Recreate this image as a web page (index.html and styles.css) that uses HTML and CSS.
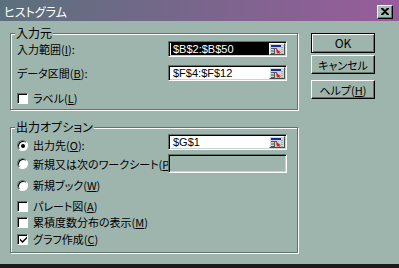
FILE: index.html
```html
<!DOCTYPE html>
<html lang="ja">
<head>
  <meta charset="UTF-8" />
  <meta name="viewport" content="width=device-width, initial-scale=1.0"/>
  <title>ヒストグラム</title>
  <link rel="stylesheet" href="styles.css">
</head>
<body>
  <div class="window">
    <div class="titlebar">
      <span class="title">ヒストグラム</span>
      <button class="close-btn">
        <svg width="8" height="7" viewBox="0 0 8 7"><path d="M0 0h2l2 2 2-2h2v1L5 3.5 8 6v1H6L4 5 2 7H0V6l3-2.5L0 1z" fill="#000"/></svg>
      </button>
    </div>

    <div class="dialog">
      <div class="groups">
        <div class="group group-input">
          <span class="legend">入力元</span>
          <div class="row">
            <span class="field-label">入力範囲(<u>I</u>):</span>
            <div class="refedit selected">
              <span class="value">$B$2:$B$50</span>
              <span class="pick"><svg width="12" height="9" viewBox="0 0 12 9"><rect x="0" y="0" width="10" height="2" fill="#1a2a9a"/><path d="M0 3.5h6M0 6h4M0 8.5h4M3.5 3v6" stroke="#4a5a60" stroke-width="1"/><path d="M5 3.5l5 4-2 .2 1.2 1.3h-1L7 7.8 6 9z" fill="#e01818"/><path d="M11 2v7" stroke="#7a8a90" stroke-dasharray="1 1"/></svg></span>
            </div>
          </div>
          <div class="row row-second">
            <span class="field-label">データ区間(<u>B</u>):</span>
            <div class="refedit">
              <span class="value">$F$4:$F$12</span>
              <span class="pick"><svg width="12" height="9" viewBox="0 0 12 9"><rect x="0" y="0" width="10" height="2" fill="#1a2a9a"/><path d="M0 3.5h6M0 6h4M0 8.5h4M3.5 3v6" stroke="#4a5a60" stroke-width="1"/><path d="M5 3.5l5 4-2 .2 1.2 1.3h-1L7 7.8 6 9z" fill="#e01818"/><path d="M11 2v7" stroke="#7a8a90" stroke-dasharray="1 1"/></svg></span>
            </div>
          </div>
          <div class="row row-label">
            <span class="choice"><span class="checkbox"></span><span class="choice-text">ラベル(<u>L</u>)</span></span>
          </div>
        </div>

        <div class="group group-output">
          <span class="legend">出力オプション</span>
          <div class="row row-dest">
            <span class="choice"><span class="radio on"></span><span class="choice-text">出力先(<u>O</u>):</span></span>
            <div class="refedit">
              <span class="value">$G$1</span>
              <span class="pick"><svg width="12" height="9" viewBox="0 0 12 9"><rect x="0" y="0" width="10" height="2" fill="#1a2a9a"/><path d="M0 3.5h6M0 6h4M0 8.5h4M3.5 3v6" stroke="#4a5a60" stroke-width="1"/><path d="M5 3.5l5 4-2 .2 1.2 1.3h-1L7 7.8 6 9z" fill="#e01818"/><path d="M11 2v7" stroke="#7a8a90" stroke-dasharray="1 1"/></svg></span>
            </div>
          </div>
          <div class="row row-sheet">
            <span class="choice"><span class="radio"></span><span class="choice-text">新規又は次のワークシート(<u>P</u>):</span></span>
            <div class="textbox disabled"></div>
          </div>
          <div class="row row-book">
            <span class="choice"><span class="radio"></span><span class="choice-text">新規ブック(<u>W</u>)</span></span>
          </div>
          <div class="row row-check row-pareto">
            <span class="choice"><span class="checkbox"></span><span class="choice-text">パレート図(<u>A</u>)</span></span>
          </div>
          <div class="row row-check">
            <span class="choice"><span class="checkbox"></span><span class="choice-text">累積度数分布の表示(<u>M</u>)</span></span>
          </div>
          <div class="row row-check row-chart">
            <span class="choice"><span class="checkbox checked"><svg width="7" height="7" viewBox="0 0 7 7"><path d="M0 2.5l2.5 2.5L7 0.5v2L2.5 7 0 4.5z" fill="#000"/></svg></span><span class="choice-text">グラフ作成(<u>C</u>)</span></span>
          </div>
        </div>
      </div>

      <div class="buttons">
        <button class="btn btn-default">OK</button>
        <button class="btn btn-cancel">キャンセル</button>
        <button class="btn btn-help">ヘルプ(<u>H</u>)</button>
      </div>
    </div>
  </div>
</body>
</html>
```

FILE: styles.css
```css
* {
  box-sizing: border-box;
}
body {
  margin: 0;
  background: #1c1c1c;
  font-family: "Noto Sans CJK JP", sans-serif;
  font-size: 11px;
  font-feature-settings: "palt";
  color: #000;
}
u {
  text-decoration: underline;
  text-underline-offset: 1px;
}
.window {
  width: 399px;
  height: 264px;
  background: #9eb5ad;
}
.titlebar {
  height: 21px;
  display: flex;
  align-items: center;
  padding: 2px 6px 0 4px;
  background: linear-gradient(to right, #5b707c, #985c9c);
}
.title {
  flex: 1;
  color: #fff;
  font-size: 12px;
  line-height: 14px;
}
.close-btn {
  width: 16px;
  height: 14px;
  padding: 0;
  display: flex;
  align-items: center;
  justify-content: center;
  background: #a6bcb4;
  border: 1px solid;
  border-color: #fff #000 #000 #fff;
  box-shadow: inset -1px -1px 0 #60746c;
}

.dialog {
  display: flex;
  align-items: flex-start;
  padding: 12px 0 0 10px;
}
.groups {
  width: 289px;
}
.group {
  position: relative;
  width: 288px;
  border: 1px solid #60746c;
  box-shadow: 1px 1px 0 #fff, inset 1px 1px 0 #fff;
  padding: 6px 9px 2px 6px;
}
.group-output {
  margin-top: 17px;
  padding-bottom: 5px;
}
.legend {
  position: absolute;
  top: -8px;
  left: 4px;
  padding: 0 1px;
  font-size: 12px;
  line-height: 14px;
  background: #9eb5ad;
}

.row {
  display: flex;
  align-items: center;
  height: 18px;
}
.row-second {
  margin-top: 6px;
}
.row-label {
  margin-top: 7px;
}
.field-label {
  width: 151px;
  line-height: 16px;
}
.choice {
  width: 151px;
  display: flex;
  align-items: center;
  gap: 5px;
}
.choice-text {
  white-space: nowrap;
  line-height: 16px;
}

.refedit {
  width: 119px;
  height: 16px;
  display: flex;
  align-items: center;
  background: #fff;
  border: 1px solid;
  border-color: #60746c #fff #fff #60746c;
  box-shadow: inset 1px 1px 0 #000, inset -1px -1px 0 #c8d4cf;
  padding: 1px;
}
.value {
  flex: 1;
  height: 12px;
  margin-left: 1px;
  padding-left: 2px;
  font-family: "Liberation Sans", Arial, sans-serif;
  font-feature-settings: normal;
  font-size: 11px;
  line-height: 12px;
}
.refedit.selected .value {
  background: #000;
  color: #fff;
}
.pick {
  width: 16px;
  height: 12px;
  display: flex;
  align-items: center;
  justify-content: center;
  background: #cdd7d3;
  border: 1px solid;
  border-color: #fff #40504a #40504a #fff;
}

.textbox {
  width: 119px;
  height: 19px;
  border: 1px solid;
  border-color: #60746c #fff #fff #60746c;
  box-shadow: inset 1px 1px 0 #000, inset -1px -1px 0 #c8d4cf;
}
.textbox.disabled {
  background: #9eb5ad;
}

.row-dest {
  align-items: flex-start;
}
.row-dest .choice {
  margin-top: 3px;
}
.row-sheet {
  height: 19px;
  margin-top: 2px;
}
.row-sheet .choice {
  height: 18px;
  overflow: hidden;
}
.row-book {
  margin-top: 3px;
}
.row-check {
  height: 16px;
}
.row-pareto {
  margin-top: 4px;
}
.row-chart {
  margin-top: 1px;
}

.checkbox {
  flex: none;
  width: 11px;
  height: 11px;
  display: flex;
  align-items: center;
  justify-content: center;
  background: #fff;
  border: 1px solid;
  border-color: #60746c #fff #fff #60746c;
  box-shadow: inset 1px 1px 0 #000;
  padding: 1px 0 0 1px;
}
.radio {
  flex: none;
  width: 11px;
  height: 11px;
  border-radius: 50%;
  display: flex;
  align-items: center;
  justify-content: center;
  background: #fff;
  border: 1px solid;
  border-color: #60746c #fff #fff #60746c;
  box-shadow: inset 1px 1px 0 #000;
}
.radio.on::after {
  content: "";
  width: 4px;
  height: 4px;
  margin: 1px 0 0 1px;
  border-radius: 50%;
  background: #000;
}

.buttons {
  display: flex;
  flex-direction: column;
  margin-left: 12px;
}
.btn {
  width: 64px;
  height: 19px;
  padding: 0;
  font-family: "Noto Sans CJK JP", sans-serif;
  font-size: 11px;
  font-feature-settings: "palt";
  line-height: 14px;
  color: #000;
  background: #9eb5ad;
  border: 1px solid;
  border-color: #fff #000 #000 #fff;
  box-shadow: inset -1px -1px 0 #60746c;
}
.btn-default {
  height: 20px;
  font-size: 12px;
  border-color: #000;
  box-shadow: inset 1px 1px 0 #fff, inset -1px -1px 0 #60746c;
}
.btn-cancel {
  margin-top: 2px;
}
.btn-help {
  margin-top: 6px;
}
```
